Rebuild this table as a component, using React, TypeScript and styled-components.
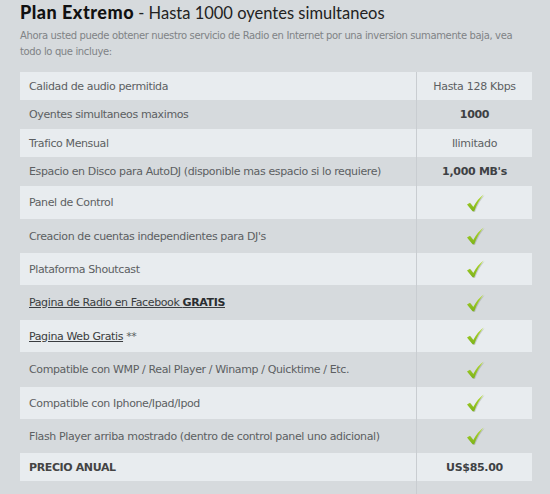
import React from "react";
import styled, { createGlobalStyle } from "styled-components";

const Global = createGlobalStyle`
  html, body { margin: 0; padding: 0; background: #d6dadd; }
  body { font-family: "DejaVu Sans", Verdana, sans-serif; }
`;

const Page = styled.div`
  width: 550px;
  height: 494px;
  overflow: hidden;
  padding: 0 18px 0 20px;
  box-sizing: border-box;
`;

const Title = styled.h1`
  margin: 0;
  padding-top: 1px;
  height: 27px;
  font-family: "Lato", sans-serif;
  font-size: 16.5px;
  font-weight: normal;
  color: #222;
  white-space: nowrap;
`;

const Brand = styled.span`
  font-family: "Lato", "DejaVu Sans", sans-serif;
  font-weight: 900;
  font-size: 18px;
  color: #111;
  letter-spacing: 0.5px;
`;

const Intro = styled.p`
  margin: 0;
  font-size: 10px;
  line-height: 16px;
  letter-spacing: -0.36px;
  color: #808386;
  height: 44px;
`;

const Table = styled.div`
  width: 512px;
  display: flex;
  flex-direction: column;
`;

const Row = styled.div<{ $light: boolean; $h: number }>`
  display: grid;
  grid-template-columns: 397px 115px;
  height: ${(p) => p.$h}px;
  background: ${(p) => (p.$light ? "#e8ecef" : "transparent")};
`;

const Label = styled.div<{ $bold?: boolean }>`
  display: flex;
  align-items: center;
  padding-left: 9px;
  font-size: 11px;
  letter-spacing: -0.38px;
  color: ${(p) => (p.$bold ? "#444" : "#5c5f62")};
  font-weight: ${(p) => (p.$bold ? "bold" : "normal")};
  white-space: nowrap;
  border-right: 1px solid #c9cdd1;
`;

const Value = styled.div<{ $bold?: boolean }>`
  display: flex;
  align-items: center;
  justify-content: center;
  font-size: 11px;
  letter-spacing: -0.3px;
  color: ${(p) => (p.$bold ? "#3e4144" : "#5c5f62")};
  font-weight: ${(p) => (p.$bold ? "bold" : "normal")};
  white-space: nowrap;
`;

const Link = styled.a`
  color: #3a3d40;
  text-decoration: underline;
`;

const Strong = styled.b`
  color: #2a2d30;
`;

const Check = () => (
  <svg width="22" height="20" viewBox="0 0 22 20">
    <defs>
      <linearGradient id="cg" x1="0" y1="0" x2="0" y2="1">
        <stop offset="0" stopColor="#b5dc2c" />
        <stop offset="1" stopColor="#7cb21a" />
      </linearGradient>
    </defs>
    <path d="M3 11.5 L6 9.8 L9.3 14 C12 8.5 15.5 4.5 19.8 1.5 C16 5.8 12.8 11 10.2 18.2 L8.6 18.2 Z" fill="rgba(90,100,90,0.25)" transform="translate(0.8,0.8)" />
    <path d="M3 11.5 L6 9.8 L9.3 14 C12 8.5 15.5 4.5 19.8 1.5 C16 5.8 12.8 11 10.2 18.2 L8.6 18.2 Z" fill="url(#cg)" />
  </svg>
);

type Item = { label: React.ReactNode; value: React.ReactNode; bold?: boolean; labelBold?: boolean; h: number };

const rows: Item[] = [
  { label: "Calidad de audio permitida", value: "Hasta 128 Kbps", h: 28 },
  { label: "Oyentes simultaneos maximos", value: "1000", bold: true, h: 29 },
  { label: "Trafico Mensual", value: "Ilimitado", h: 28 },
  { label: "Espacio en Disco para AutoDJ (disponible mas espacio si lo requiere)", value: "1,000 MB's", bold: true, h: 29 },
  { label: "Panel de Control", value: <Check />, h: 33 },
  { label: "Creacion de cuentas independientes para DJ's", value: <Check />, h: 34 },
  { label: "Plataforma Shoutcast", value: <Check />, h: 32 },
  {
    label: (
      <Link href="#">
        Pagina de Radio en Facebook <Strong>GRATIS</Strong>
      </Link>
    ),
    value: <Check />,
    h: 35,
  },
  {
    label: (
      <span>
        <Link href="#">Pagina Web Gratis</Link> **
      </span>
    ),
    value: <Check />,
    h: 32,
  },
  { label: "Compatible con WMP / Real Player / Winamp / Quicktime / Etc.", value: <Check />, h: 35 },
  { label: "Compatible con Iphone/Ipad/Ipod", value: <Check />, h: 32 },
  { label: "Flash Player arriba mostrado (dentro de control panel uno adicional)", value: <Check />, h: 34 },
  { label: "PRECIO ANUAL", value: "US$85.00", bold: true, labelBold: true, h: 28 },
  { label: "", value: "", h: 30 },
];

export default function App() {
  return (
    <Page>
      <Global />
      <Title>
        <Brand>Plan Extremo</Brand> - Hasta 1000 oyentes simultaneos
      </Title>
      <Intro>
        Ahora usted puede obtener nuestro servicio de Radio en Internet por una inversion sumamente baja, vea todo lo que incluye:
      </Intro>
      <Table>
        {rows.map((r, i) => (
          <Row key={i} $light={i % 2 === 0} $h={r.h}>
            <Label $bold={r.labelBold}>{r.label}</Label>
            <Value $bold={r.bold}>{r.value}</Value>
          </Row>
        ))}
      </Table>
    </Page>
  );
}
